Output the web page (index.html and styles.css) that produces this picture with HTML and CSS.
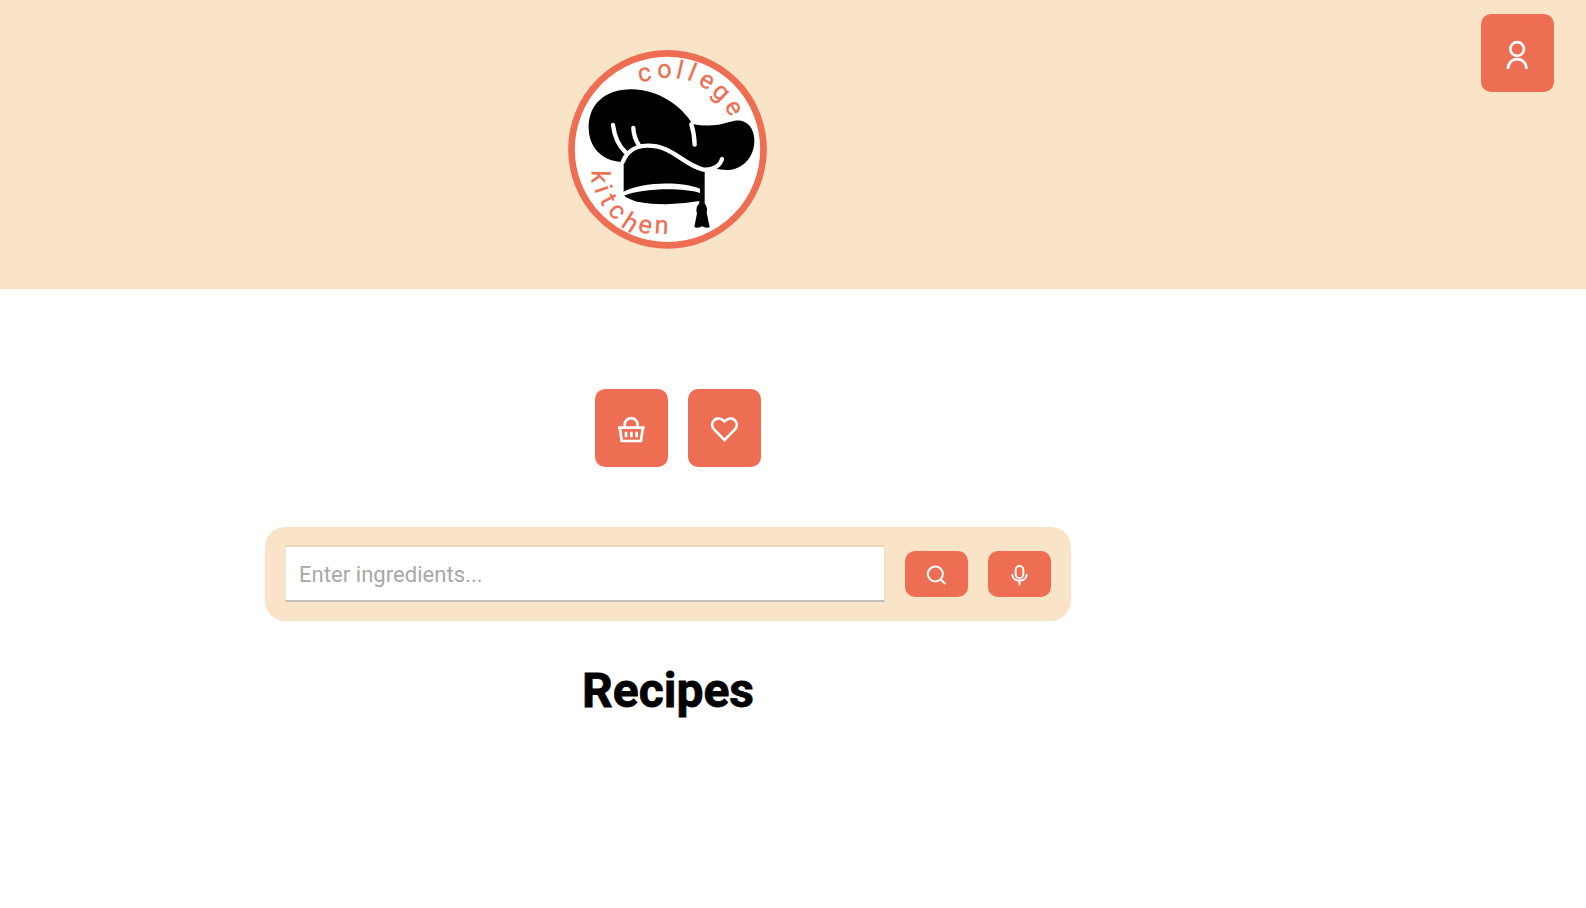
FILE: index.html
```html
<!DOCTYPE html>
<html lang="en">
<head>
<meta charset="utf-8">
<title>College Kitchen</title>
<link rel="stylesheet" href="styles.css">
</head>
<body>
<header class="header">
  <svg class="logo" viewBox="0 0 648 648" role="img" aria-label="college kitchen">
    <circle cx="322.500" cy="328" r="288" fill="#fff" stroke="#ed6e52" stroke-width="20"/>
    <path d="M183 366C124 362 86 321 86 262C86 193 135 148 213 148C296 148 366 199 397 252Q454 264 508 246C553 230 583 256 583 302C583 352 548 389 500 390Q480 389 468 386L434 396V490Q444 503 440 518L449 562Q436 566 427 559Q416 566 403 561L411 520Q405 504 418 490V483Q320 501 231 485Q204 478 191 466V370Z"/>
    <g class="folds">
      <path d="M188 366C206 319 250 312 290 319C345 329 373 374 430 389C459 391 480 378 486 357"/>
      <path d="M159 255C163 287 172 314 197 337M220 264Q221 292 237 316M394 253Q403 280 404 314"/>
    </g>
    <path d="M188 457C240 425 365 423 420 446V459C365 441 240 445 190 468Z" fill="#fff"/>
    <text class="logo-text" x="238 292 345 379 412 452 491" y="126.500 113 113 118 131 158 199" rotate="-10 0 13 22 31 44 57">college</text>
    <text class="logo-text" x="95 103 118 141 180 231 283" y="391 446 479 513 558 574 580" rotate="91 71 62 50 33 14 3">kitchen</text>
  </svg>
  <button class="tile profile" aria-label="Profile">
    <svg viewBox="0 0 219 234"><circle cx="108.500" cy="105" r="20.500"/><path d="M81 165V163A27.700 27.700 0 0 1 136.500 163V165"/></svg>
  </button>
</header>
<main class="content">
  <nav class="actions">
    <button class="tile" aria-label="Basket">
      <svg viewBox="0 0 219 234"><path d="M69 116H149M75 119L80 156H138L143 119M89 114V107A19.500 19.500 0 0 1 128 107V114"/><path d="M93 128V145M109 128V145M125 128V145"/></svg>
    </button>
    <button class="tile" aria-label="Favorites">
      <svg viewBox="0 0 219 234"><path d="M109.500 153L79 122C70 112 71 101 78 94C87 86 99 86 109.500 97C120 86 132 86 141 94C148 101 149 112 140 122Z"/></svg>
    </button>
  </nav>
  <form class="search">
    <input class="field" type="text" placeholder="Enter ingredients...">
    <button class="pill" type="button" aria-label="Search">
      <svg viewBox="0 0 189 138"><circle cx="91" cy="69" r="22.500"/><path d="M107 85L121 99"/></svg>
    </button>
    <button class="pill" type="button" aria-label="Voice">
      <svg viewBox="0 0 189 138"><rect x="83" y="45" width="23" height="36" rx="11.500"/><path d="M72.500 69C72.500 95 116.500 95 116.500 69M94.500 89V103"/></svg>
    </button>
  </form>
  <h1 class="title">Recipes</h1>
</main>
</body>
</html>
```
FILE: styles.css
```css
* { box-sizing: border-box; }
body { margin: 0; background: #fff; font-family: Roboto, sans-serif; }
.header { position: relative; display: flex; width: 100%; height: 289px; padding: 40px 0 0 560px; background: #fae4c8; }
.logo { width: 216px; height: 216px; }
.folds { fill: none; stroke: #fff; stroke-width: 13px; stroke-linecap: round; }
.logo-text { font-size: 76px; fill: #ed6e52; stroke: #ed6e52; stroke-width: 0.8px; }
.tile, .pill { padding: 0; border: 0; border-radius: 10px; background: #ed6e52; }
.tile { width: 73px; height: 78px; }
.pill { width: 63px; height: 46px; }
.tile svg, .pill svg { display: block; width: 100%; height: 100%; fill: none; stroke: #fff; stroke-width: 8px; }
.pill svg { stroke-width: 6px; }
.profile { position: absolute; top: 14px; right: 32px; }
.content { display: flex; flex-direction: column; align-items: center; width: 1336px; padding-top: 100px; }
.actions { display: flex; gap: 20px; margin-left: 20px; }
.search { display: flex; align-items: center; gap: 20px; width: 806px; height: 94px; margin-top: 60px; padding: 0 20px; border-radius: 20px; background: #fae4c8; }
.field { width: 600px; height: 57px; margin-bottom: 2px; padding: 3px 13px 0; border: 1px solid #e9e3dc; border-top: 2px solid #ecd6b8; border-bottom: 2px solid #c2c0be; background: #fff; font: 22px Roboto, sans-serif; letter-spacing: 0.05px; }
.field::placeholder { color: #a8a8a8; opacity: 1; }
.title { margin: 42px 0 0; font-size: 48px; line-height: 56px; font-weight: 700; -webkit-text-stroke: 0.8px #000; }
```
